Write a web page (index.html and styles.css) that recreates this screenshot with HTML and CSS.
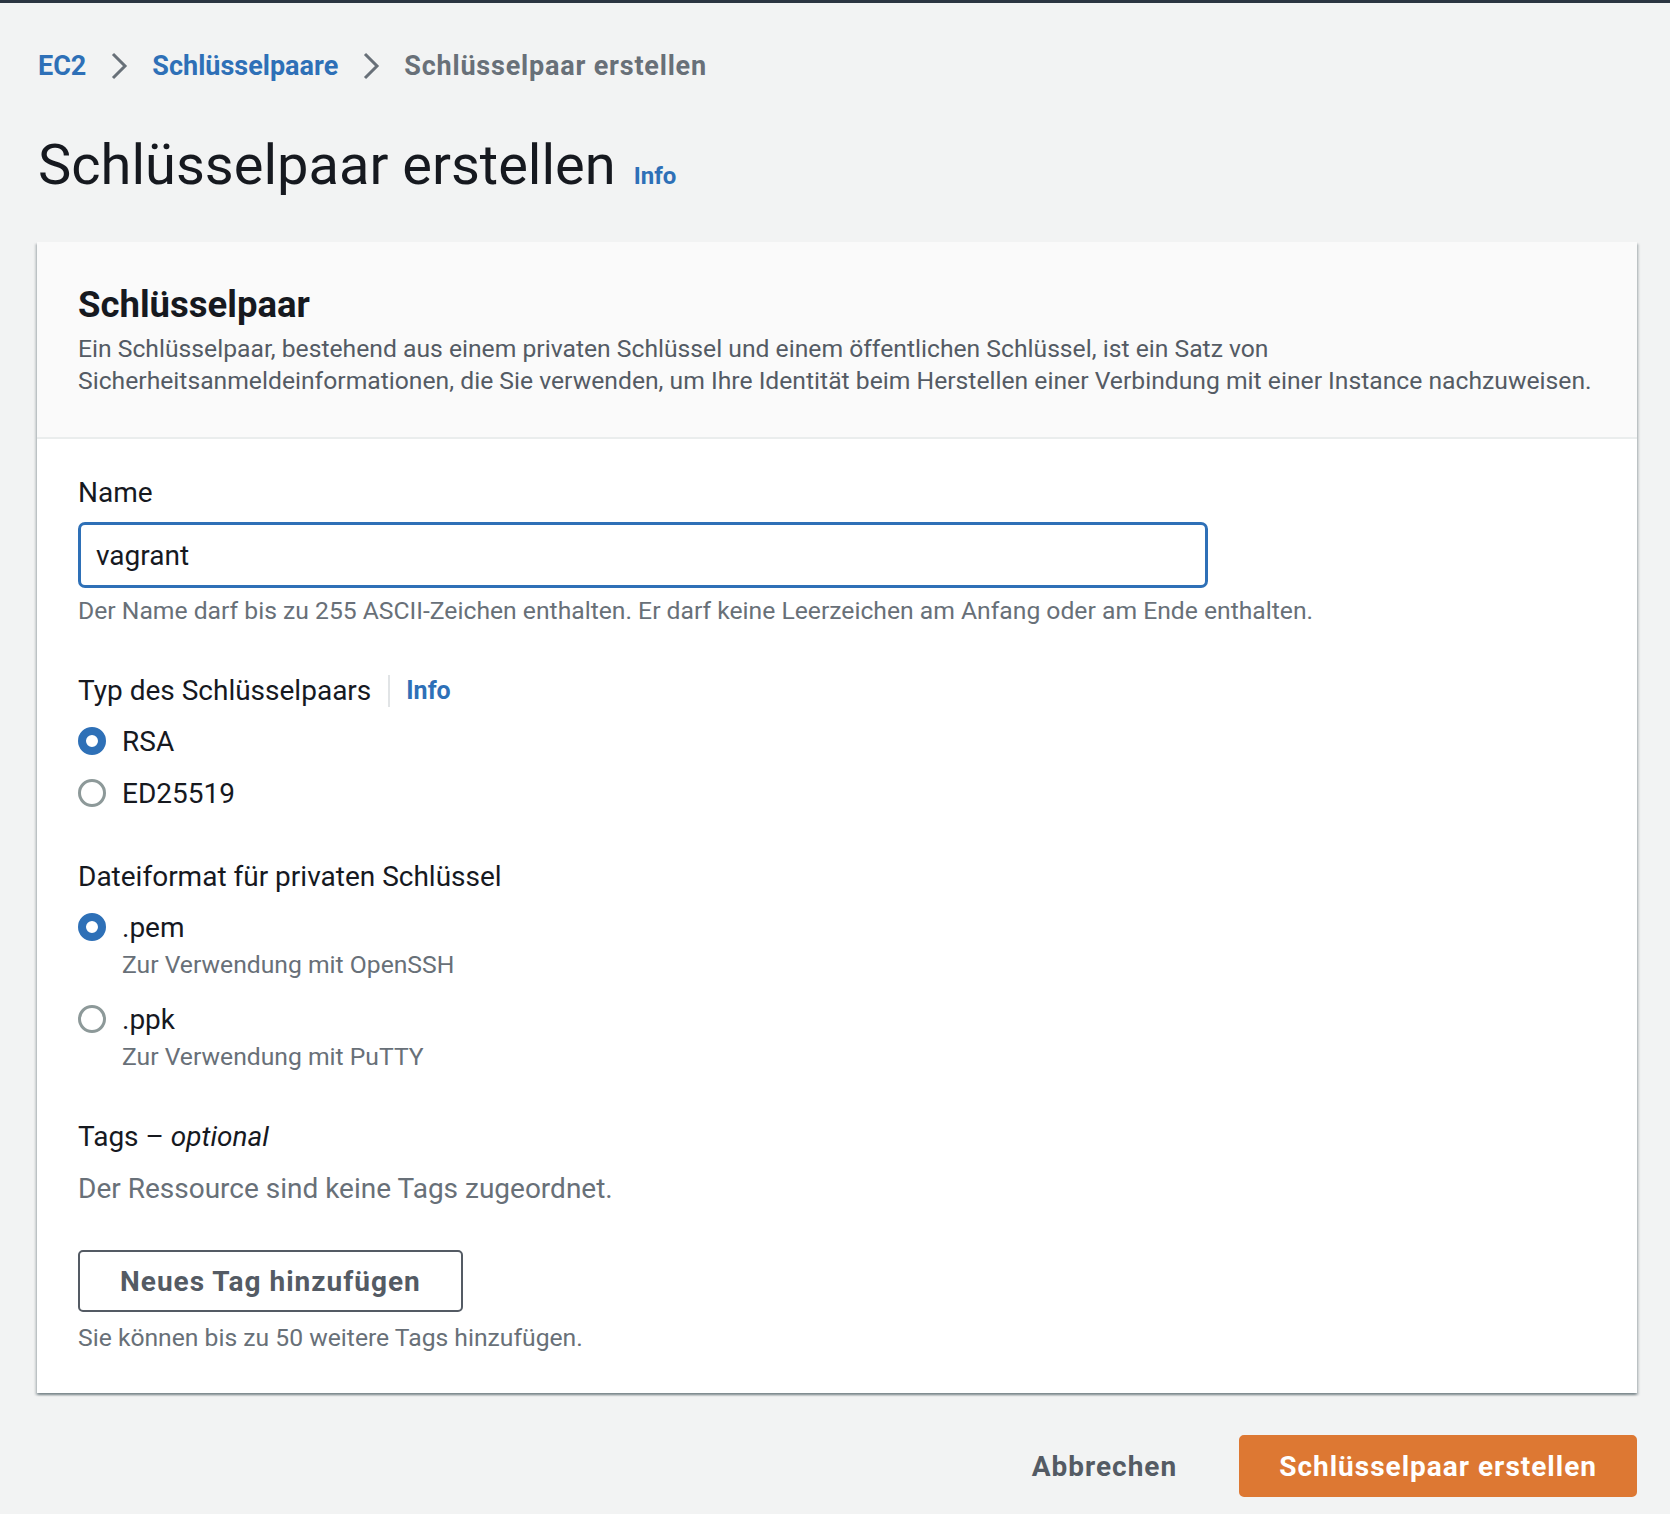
FILE: index.html
```html
<!DOCTYPE html>
<html lang="de">
<head>
<meta charset="utf-8">
<title>Schlüsselpaar erstellen</title>
<link rel="stylesheet" href="styles.css">
</head>
<body>
<div class="topbar"></div>
<main class="page">
  <nav class="breadcrumbs">
    <a class="crumb crumb-link">EC2</a>
    <svg class="chev" width="18" height="28" viewBox="0 0 18 28"><polyline points="3,2 15,14 3,26" fill="none" stroke="#687078" stroke-width="3"/></svg>
    <a class="crumb crumb-link">Schlüsselpaare</a>
    <svg class="chev" width="18" height="28" viewBox="0 0 18 28"><polyline points="3,2 15,14 3,26" fill="none" stroke="#687078" stroke-width="3"/></svg>
    <span class="crumb crumb-current">Schlüsselpaar erstellen</span>
  </nav>

  <h1 class="page-title">Schlüsselpaar erstellen<a class="info info-title">Info</a></h1>

  <section class="card">
    <header class="card-header">
      <h2 class="card-title">Schlüsselpaar</h2>
      <p class="card-desc">Ein Schlüsselpaar, bestehend aus einem privaten Schlüssel und einem öffentlichen Schlüssel, ist ein Satz von<br>Sicherheitsanmeldeinformationen, die Sie verwenden, um Ihre Identität beim Herstellen einer Verbindung mit einer Instance nachzuweisen.</p>
    </header>

    <div class="card-body">
      <div class="field">
        <div class="label">Name</div>
        <div class="input">vagrant</div>
        <p class="hint">Der Name darf bis zu 255 ASCII-Zeichen enthalten. Er darf keine Leerzeichen am Anfang oder am Ende enthalten.</p>
      </div>

      <div class="field">
        <div class="label label-row">
          <span>Typ des Schlüsselpaars</span>
          <span class="divider"></span>
          <a class="info info-label">Info</a>
        </div>
        <div class="radio-group">
          <div class="radio-item">
            <div class="radio-row"><span class="radio checked"></span><span class="radio-label">RSA</span></div>
          </div>
          <div class="radio-item">
            <div class="radio-row"><span class="radio"></span><span class="radio-label">ED25519</span></div>
          </div>
        </div>
      </div>

      <div class="field">
        <div class="label">Dateiformat für privaten Schlüssel</div>
        <div class="radio-group radio-group-desc">
          <div class="radio-item">
            <div class="radio-row"><span class="radio checked"></span><span class="radio-label">.pem</span></div>
            <div class="radio-desc">Zur Verwendung mit OpenSSH</div>
          </div>
          <div class="radio-item">
            <div class="radio-row"><span class="radio"></span><span class="radio-label">.ppk</span></div>
            <div class="radio-desc">Zur Verwendung mit PuTTY</div>
          </div>
        </div>
      </div>

      <div class="field">
        <div class="label">Tags – <i>optional</i></div>
        <p class="empty">Der Ressource sind keine Tags zugeordnet.</p>
        <button class="btn btn-normal" type="button">Neues Tag hinzufügen</button>
        <p class="hint hint-tight">Sie können bis zu 50 weitere Tags hinzufügen.</p>
      </div>
    </div>
  </section>

  <div class="actions">
    <button class="btn btn-link" type="button">Abbrechen</button>
    <button class="btn btn-primary" type="button">Schlüsselpaar erstellen</button>
  </div>
</main>
</body>
</html>
```

FILE: styles.css
```css
html, body {
  margin: 0;
  padding: 0;
}

body {
  background: #f2f3f3;
  font-family: Roboto, "Liberation Sans", Arial, sans-serif;
  color: #16191f;
  min-height: 1514px;
}

.topbar {
  height: 3px;
  background: #2b3541;
}

.page {
  padding: 43px 33px 0 37px;
}

/* Breadcrumbs */
.breadcrumbs {
  display: flex;
  align-items: center;
  gap: 24px;
  height: 40px;
  margin-left: 1px;
  font-size: 27px;
  font-weight: 700;
  line-height: 40px;
}

.crumb-link {
  color: #2e70b7;
  text-decoration: none;
}

.crumb-current {
  color: #687078;
  letter-spacing: 0.8px;
}

.chev {
  display: block;
}

/* Title */
.page-title {
  margin: 43px 0 0 1px;
  font-size: 56px;
  font-weight: 400;
  line-height: 72px;
  color: #16191f;
}

.info {
  color: #2e70b7;
  font-weight: 700;
  text-decoration: none;
}

.info-title {
  font-size: 24px;
  line-height: 1;
  margin-left: 18px;
}

/* Card */
.card {
  margin-top: 41px;
  background: #ffffff;
  box-shadow: 0 2px 2px 0 rgba(0, 28, 36, 0.3), 2px 2px 2px 0 rgba(0, 28, 36, 0.15), -2px 2px 2px 0 rgba(0, 28, 36, 0.15);
}

.card-header {
  background: #fafafa;
  padding: 41px 41px 40px;
  border-bottom: 2px solid #eaeded;
}

.card-title {
  margin: 0;
  font-size: 36.5px;
  line-height: 44px;
  font-weight: 700;
  color: #16191f;
}

.card-desc {
  margin: 6px 0 0;
  font-size: 24.7px;
  line-height: 32px;
  color: #545b64;
}

.card-body {
  padding: 34px 41px 39px;
}

.field + .field {
  margin-top: 44px;
}

.label {
  font-size: 28px;
  line-height: 40px;
  color: #16191f;
}

.label-row {
  display: flex;
  align-items: center;
}

.divider {
  width: 2px;
  height: 32px;
  background: #e1e4e6;
  margin: 0 16px 0 17px;
}

.info-label {
  font-size: 25px;
}

.input {
  margin-top: 9px;
  width: 1130px;
  height: 66px;
  box-sizing: border-box;
  border: 3px solid #2e70b7;
  border-radius: 7px;
  padding: 0 15px;
  display: flex;
  align-items: center;
  font-size: 28px;
  color: #16191f;
}

.hint {
  margin: 7px 0 0;
  font-size: 24.7px;
  line-height: 32px;
  color: #687078;
}

.hint-tight {
  margin-top: 10px;
}

/* Radios */
.radio-group {
  margin-top: 10px;
  display: flex;
  flex-direction: column;
  gap: 12px;
}

.radio-group-desc {
  gap: 18px;
}

.radio-row {
  display: flex;
  align-items: center;
  height: 40px;
  gap: 16px;
}

.radio {
  width: 28px;
  height: 28px;
  box-sizing: border-box;
  border-radius: 50%;
  border: 3px solid #8d9999;
  background: #fff;
  flex: none;
}

.radio.checked {
  border: 8px solid #2e70b7;
}

.radio-label {
  font-size: 28px;
  color: #16191f;
}

.radio-desc {
  margin-top: 2px;
  padding-left: 44px;
  font-size: 24.7px;
  line-height: 32px;
  color: #687078;
}

/* Tags */
.empty {
  margin: 12px 0 0;
  font-size: 28px;
  line-height: 40px;
  color: #687078;
}

/* Buttons */
.btn {
  font-family: inherit;
  font-size: 28px;
  font-weight: 700;
  letter-spacing: 1px;
  height: 62px;
  padding: 0 40px;
  border-radius: 5px;
  cursor: pointer;
}

.btn-normal {
  display: block;
  margin-top: 41px;
  background: #fff;
  border: 2px solid #545b64;
  color: #545b64;
}

.btn-link {
  background: transparent;
  border: 2px solid transparent;
  color: #545b64;
}

.btn-primary {
  padding: 0 38px;
  background: #dd7833;
  border: 2px solid #dd7833;
  color: #fff;
}

.actions {
  margin-top: 42px;
  display: flex;
  justify-content: flex-end;
  gap: 20px;
}
```
